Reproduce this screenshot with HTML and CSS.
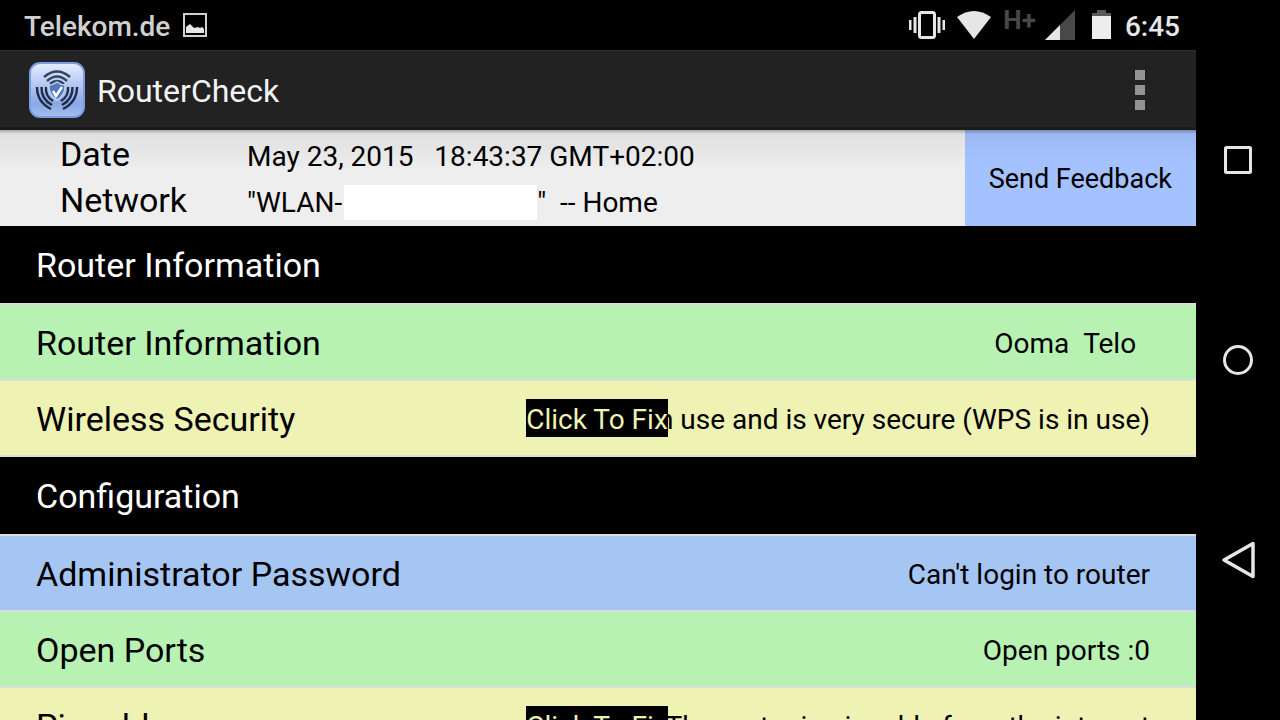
FILE: index.html
```
<!DOCTYPE html>
<html lang="en">
<head>
    <meta charset="UTF-8">
    <meta name="viewport" content="width=device-width, initial-scale=1">
    <title>RouterCheck</title>
    <link rel="stylesheet" href="styles.css">
</head>
<body>
    <div class="screen">
        <div class="status-bar">
            <span class="carrier">Telekom.de</span>
            <svg class="picture-icon" width="24" height="24" viewBox="0 0 24 24">
                <rect x="1" y="1" width="22" height="22" fill="none" stroke="#d0d0d0" stroke-width="2"/>
                <path d="M3 20v-6l4-3 4 4 4-1 2 1 2-1 2 2v4z" fill="#e6e6e6"/>
            </svg>
            <div class="status-icons">
                <svg width="36" height="30" viewBox="0 0 36 30" fill="#e6e6e6">
                    <rect x="10.5" y="2.5" width="15" height="25" rx="2" fill="none" stroke="#e6e6e6" stroke-width="3"/>
                    <rect x="0" y="10" width="2.5" height="10"/>
                    <rect x="4.5" y="7" width="3" height="16"/>
                    <rect x="28.5" y="7" width="3" height="16"/>
                    <rect x="33.5" y="10" width="2.5" height="10"/>
                </svg>
                <svg class="wifi-icon" width="36" height="30" viewBox="0 0 36 30">
                    <path d="M1 7Q18-5 35 7L18 29z" fill="#e6e6e6"/>
                </svg>
                <span class="network-type">H+</span>
                <svg class="signal-icon" width="30" height="30" viewBox="0 0 30 30">
                    <path d="M30 0v30H0z" fill="#484848"/>
                    <path d="M15 15v15H0z" fill="#e6e6e6"/>
                </svg>
                <svg class="battery-icon" width="20" height="30" viewBox="0 0 20 30">
                    <path d="M0 3h5V0h9v3h5v4H0z" fill="#5a5a5a"/>
                    <rect x="0" y="6" width="19" height="23" fill="#ededed"/>
                </svg>
                <span class="clock">6:45</span>
            </div>
        </div>

        <header class="app-bar">
            <svg class="app-icon" width="56" height="56" viewBox="0 0 56 56">
                <defs>
                    <linearGradient id="iconFill" x1="0" y1="0" x2="0" y2="1">
                        <stop offset="0" stop-color="#e6eeff"/>
                        <stop offset="0.4" stop-color="#b4c8f2"/>
                        <stop offset="0.75" stop-color="#8ba8e6"/>
                        <stop offset="1" stop-color="#a4beef"/>
                    </linearGradient>
                </defs>
                <rect x="1" y="1" width="54" height="54" rx="10" fill="url(#iconFill)" stroke="#7c9ce0" stroke-width="2"/>
                <!-- radio waves above the shield -->
                <g fill="none" stroke="#35435f" stroke-width="2.4">
                    <path d="M15 15Q28 4 41 15"/>
                    <path d="M18 19Q28 10 38 19"/>
                    <path d="M21 22Q28 16 35 22"/>
                </g>
                <!-- radio waves to the left and right -->
                <g fill="none" stroke="#1d2c49" stroke-width="2.4">
                    <path d="M8 25Q8 40 22 47"/>
                    <path d="M12.5 25Q12 37 23 43"/>
                    <path d="M17 25Q16 34 24 39"/>
                    <path d="M48 25Q48 40 34 47"/>
                    <path d="M43.5 25Q44 37 33 43"/>
                    <path d="M39 25Q40 34 32 39"/>
                </g>
                <path d="M28 20q4 3 8 3 1 10-8 15-9-5-8-15 4 0 8-3z" fill="#5278c4" stroke="#c3d0e8" stroke-width="1.5"/>
                <path d="M24 29l3 5 6-9" fill="none" stroke="#fff" stroke-width="2.5"/>
            </svg>
            <h1 class="app-title">RouterCheck</h1>
            <button class="menu-button" aria-label="More options">
                <span class="menu-dot"></span>
                <span class="menu-dot"></span>
                <span class="menu-dot"></span>
            </button>
        </header>

        <div class="scan-info">
            <dl class="scan-details">
                <dt>Date</dt>
                <dd>May 23, 2015 &nbsp; 18:43:37 GMT+02:00</dd>
                <dt>Network</dt>
                <dd>"WLAN-<span class="hidden-name"></span>" &nbsp;-- Home</dd>
            </dl>
            <button class="feedback-button">Send Feedback</button>
        </div>

        <main class="results">
            <h2 class="section-title">Router Information</h2>
            <ul class="result-list">
                <li class="result good">
                    <span class="result-name">Router Information</span>
                    <div class="result-value">Ooma &nbsp;Telo&nbsp;&nbsp;</div>
                </li>
                <li class="result warning">
                    <span class="result-name">Wireless Security</span>
                    <div class="result-value">in use and is very secure (WPS is in use)<button class="fix-button">Click To Fix</button></div>
                </li>
            </ul>
            <h2 class="section-title">Configuration</h2>
            <ul class="result-list">
                <li class="result unknown">
                    <span class="result-name">Administrator Password</span>
                    <div class="result-value">Can't login to router</div>
                </li>
                <li class="result good">
                    <span class="result-name">Open Ports</span>
                    <div class="result-value">Open ports :0</div>
                </li>
                <li class="result warning">
                    <span class="result-name">Pingable</span>
                    <div class="result-value">The router is pingable from the internet<button class="fix-button">Click To Fix</button></div>
                </li>
            </ul>
        </main>
    </div>

    <nav class="nav-bar">
        <button class="nav-button" aria-label="Recent apps">
            <svg width="36" height="40" viewBox="0 0 36 40" fill="none" stroke="#e6e6e6" stroke-width="3">
                <rect x="5.5" y="7.5" width="25" height="25" rx="1"/>
            </svg>
        </button>
        <button class="nav-button" aria-label="Home">
            <svg width="36" height="40" viewBox="0 0 36 40" fill="none" stroke="#e6e6e6" stroke-width="3">
                <circle cx="18" cy="20" r="13.5"/>
            </svg>
        </button>
        <button class="nav-button" aria-label="Back">
            <svg width="36" height="40" viewBox="0 0 36 40" fill="none" stroke="#e6e6e6" stroke-width="3.5" stroke-linejoin="round">
                <path d="M4 20L33 3.5v33z"/>
            </svg>
        </button>
    </nav>
</body>
</html>
```
FILE: styles.css
```
* {
    margin: 0;
    padding: 0;
    box-sizing: border-box;
}

body {
    display: flex;
    height: 100vh;
    overflow: hidden;
    background-color: #000;
    color: #000;
    font-family: Roboto, "Noto Sans", sans-serif;
    font-size: 28px;
}

button {
    border: none;
    background: none;
    color: inherit;
    font: inherit;
    cursor: pointer;
}

svg {
    display: block;
    flex-shrink: 0;
}

.screen {
    flex: 1;
    min-width: 0;
}

/* Status bar */
.status-bar {
    display: flex;
    align-items: center;
    height: 50px;
    padding: 0 16px 0 24px;
    color: #d0d0d0;
    font-weight: 500;
}

.carrier {
    padding-top: 2px;
}

.picture-icon {
    margin-left: 13px;
}

.status-icons {
    display: flex;
    align-items: center;
    margin-left: auto;
}

.wifi-icon {
    margin-left: 11px;
}

.network-type {
    align-self: flex-start;
    margin-left: 11px;
    color: #484848;
    font-size: 26px;
    font-weight: 700;
    line-height: 24px;
}

.signal-icon {
    margin-left: 9px;
}

.battery-icon {
    margin-left: 17px;
}

.clock {
    margin-left: 13px;
    padding-top: 2px;
    color: #e6e6e6;
}

/* Title bar */
.app-bar {
    display: flex;
    align-items: center;
    height: 80px;
    padding: 2px 36px 0 29px;
    border-top: 1px solid #303030;
    border-bottom: 3px solid #1a1a1a;
    background-color: #222;
    color: #f3f3f3;
}

.app-title {
    margin-left: 12px;
    padding-top: 2px;
    font-size: 32px;
    font-weight: 400;
}

.menu-button {
    display: flex;
    flex-direction: column;
    gap: 5px;
    margin-left: auto;
    padding: 4px 15px;
}

.menu-dot {
    width: 10px;
    height: 10px;
    background-color: #939393;
}

/* Date and network */
.scan-info {
    display: flex;
    height: 96px;
    background: linear-gradient(rgba(0, 0, 0, 0.3), rgba(0, 0, 0, 0.06) 4px, transparent 40px), #eee;
}

.scan-details {
    display: grid;
    grid-template-columns: 187px 1fr;
    grid-auto-rows: 46px;
    align-items: baseline;
    flex: 1;
    padding: 1px 0 0 60px;
    line-height: 46px;
    white-space: nowrap;
}

.scan-details dt {
    font-size: 34px;
}

.hidden-name {
    display: inline-block;
    width: 193px;
    height: 35px;
    margin-left: 2px;
    background-color: #fff;
    vertical-align: -8px;
}

.feedback-button {
    padding: 2px 24px 0;
    background: linear-gradient(rgba(0, 0, 0, 0.3), rgba(0, 0, 0, 0.05) 4px, transparent 30px), #a4c2ff;
    font-size: 27px;
}

/* Results */
.section-title {
    height: 77px;
    padding: 0 36px;
    color: #fff;
    font-size: 34px;
    font-weight: 400;
    line-height: 78px;
}

.result-list {
    border-bottom: 2px solid #ddd;
    list-style: none;
}

.result {
    display: grid;
    grid-template-columns: 44% 1fr;
    align-items: center;
    height: 76px;
    padding-top: 2px;
    border-top: 2px solid #ddd;
    white-space: nowrap;
}

.result-name {
    padding-left: 36px;
    font-size: 34px;
}

.result-value {
    position: relative;
    padding: 2px 46px 0 0;
    line-height: 38px;
    text-align: right;
}

.fix-button {
    position: absolute;
    top: 0;
    left: 0;
    height: 38px;
    padding-top: 2px;
    background-color: #000;
    color: #eef2b2;
}

.good {
    background-color: #b7f2b2;
}

.warning {
    background-color: #eef2b2;
}

.unknown {
    background-color: #a5c5f2;
}

/* Navigation keys */
.nav-bar {
    display: flex;
    flex-direction: column;
    justify-content: center;
    gap: 160px;
    width: 84px;
}

.nav-button {
    display: flex;
    justify-content: center;
}
```
